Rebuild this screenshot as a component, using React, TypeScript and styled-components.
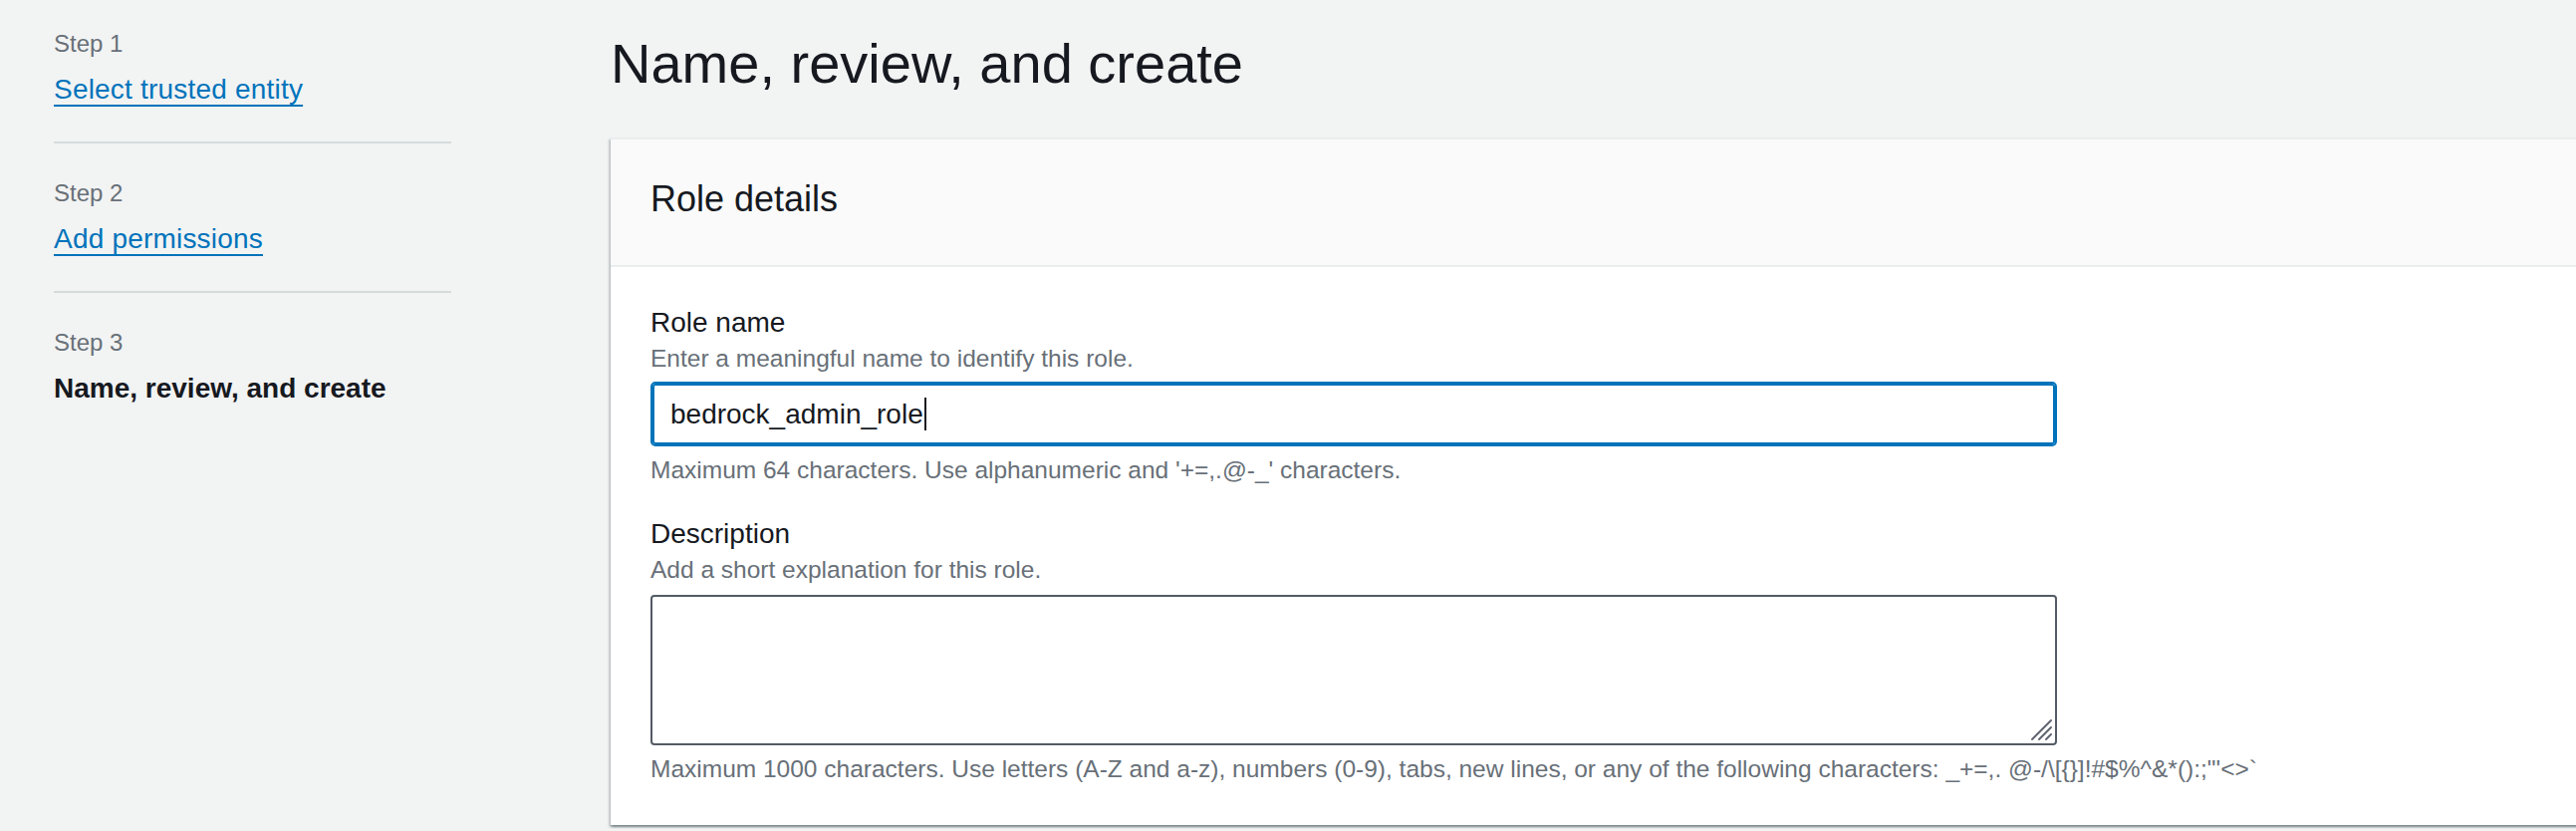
import React from "react";
import styled, { createGlobalStyle } from "styled-components";

const GlobalStyle = createGlobalStyle`
  html, body {
    margin: 0;
    padding: 0;
    background: #f2f3f3;
    overflow: hidden;
  }
  body {
    font-family: "Liberation Sans", Arial, sans-serif;
    color: #16191f;
  }
  * { box-sizing: border-box; }
`;

const Page = styled.div`
  display: flex;
  align-items: flex-start;
  gap: 160px;
  min-height: 100vh;
  padding-left: 54px;
  background: #f2f3f3;
`;

const Sidebar = styled.nav`
  width: 399px;
  flex-shrink: 0;
  padding-top: 28px;
`;

const StepList = styled.ol`
  list-style: none;
  margin: 0;
  padding: 0;
`;

const StepItem = styled.li`
  padding: 34px 0 32px;
  border-top: 2px solid #d5dbdb;
  &:first-child {
    padding-top: 0;
    border-top: none;
  }
`;

const StepLabel = styled.div`
  font-size: 24px;
  line-height: 32px;
  color: #687078;
`;

const StepLink = styled.a`
  display: inline-block;
  margin-top: 10px;
  font-size: 28px;
  line-height: 40px;
  letter-spacing: 0.2px;
  color: #0073bb;
  text-decoration: underline;
  text-decoration-thickness: 2px;
  text-underline-offset: 6px;
  cursor: pointer;
`;

const StepCurrent = styled.div`
  margin-top: 10px;
  font-size: 28px;
  line-height: 40px;
  font-weight: 700;
  color: #16191f;
`;

const Main = styled.main`
  flex: 1;
  margin-right: -40px;
  padding-top: 32px;
`;

const Title = styled.h1`
  margin: 0 0 42px;
  font-size: 56px;
  line-height: 64px;
  font-weight: 400;
  color: #16191f;
`;

const Card = styled.section`
  background: #ffffff;
  border-top: 2px solid #eaeded;
  box-shadow: 0 2px 2px 0 rgba(0, 28, 36, 0.3),
    2px 2px 2px 0 rgba(0, 28, 36, 0.15),
    -2px 2px 2px 0 rgba(0, 28, 36, 0.15);
`;

const CardHeader = styled.header`
  background: #fafafa;
  border-bottom: 2px solid #eaeded;
  padding: 38px 40px 44px;
`;

const CardTitle = styled.h2`
  margin: 0;
  font-size: 36px;
  line-height: 44px;
  font-weight: 400;
  color: #16191f;
`;

const CardBody = styled.div`
  padding: 36px 40px 40px;
`;

const Field = styled.div`
  display: flex;
  flex-direction: column;
  & + & {
    margin-top: 28px;
  }
`;

const Label = styled.label`
  font-size: 28px;
  line-height: 40px;
  color: #16191f;
`;

const Hint = styled.div<{ $gap?: number }>`
  font-size: 24.5px;
  line-height: 32px;
  color: #687078;
  margin-top: ${(p) => p.$gap ?? 0}px;
`;

const InputBox = styled.div`
  display: flex;
  align-items: center;
  margin-top: 7px;
  width: 1412px;
  height: 65px;
  padding: 0 18px;
  border: 2px solid #0073bb;
  border-radius: 5px;
  box-shadow: inset 0 0 0 2px #0073bb;
  background: #ffffff;
  font-size: 28px;
  line-height: 40px;
  color: #16191f;
`;

const Caret = styled.span`
  display: inline-block;
  width: 2px;
  height: 33px;
  margin-left: 1px;
  vertical-align: -6px;
  background: #16191f;
`;

const AreaWrap = styled.div`
  position: relative;
  margin-top: 9px;
  width: 1412px;
`;

const TextArea = styled.textarea`
  display: block;
  width: 100%;
  height: 151px;
  border: 2px solid #545b64;
  border-radius: 4px;
  background: #ffffff;
  font-family: inherit;
  font-size: 28px;
  padding: 8px 18px;
  outline: none;
  resize: none;
`;

const Grip = styled.svg`
  position: absolute;
  right: 4px;
  bottom: 4px;
  width: 24px;
  height: 24px;
  pointer-events: none;
`;

const nameConstraint =
  "Maximum 64 characters. Use alphanumeric and '+=,.@-_' characters.";
const descConstraint =
  "Maximum 1000 characters. Use letters (A-Z and a-z), numbers (0-9), tabs, new lines, or any of the following characters: _+=,. @-/\\[{}]!#$%^&*():;\"'<>`";

const steps = [
  { label: "Step 1", title: "Select trusted entity", done: true },
  { label: "Step 2", title: "Add permissions", done: true },
  { label: "Step 3", title: "Name, review, and create", done: false },
];

export default function App() {
  return (
    <>
      <GlobalStyle />
      <Page>
        <Sidebar>
          <StepList>
            {steps.map((s) => (
              <StepItem key={s.label}>
                <StepLabel>{s.label}</StepLabel>
                {s.done ? (
                  <StepLink>{s.title}</StepLink>
                ) : (
                  <StepCurrent>{s.title}</StepCurrent>
                )}
              </StepItem>
            ))}
          </StepList>
        </Sidebar>
        <Main>
          <Title>Name, review, and create</Title>
          <Card>
            <CardHeader>
              <CardTitle>Role details</CardTitle>
            </CardHeader>
            <CardBody>
              <Field>
                <Label>Role name</Label>
                <Hint>Enter a meaningful name to identify this role.</Hint>
                <InputBox>
                  <span>bedrock_admin_role</span>
                  <Caret />
                </InputBox>
                <Hint $gap={8}>{nameConstraint}</Hint>
              </Field>
              <Field>
                <Label>Description</Label>
                <Hint>Add a short explanation for this role.</Hint>
                <AreaWrap>
                  <TextArea />
                  <Grip viewBox="0 0 24 24">
                    <g stroke="#5f6670" strokeWidth="2" strokeLinecap="round">
                      <line x1="3" y1="22" x2="22" y2="3" />
                      <line x1="10" y1="22" x2="22" y2="10" />
                      <line x1="17" y1="22" x2="22" y2="17" />
                    </g>
                  </Grip>
                </AreaWrap>
                <Hint $gap={8}>{descConstraint}</Hint>
              </Field>
            </CardBody>
          </Card>
        </Main>
      </Page>
    </>
  );
}
